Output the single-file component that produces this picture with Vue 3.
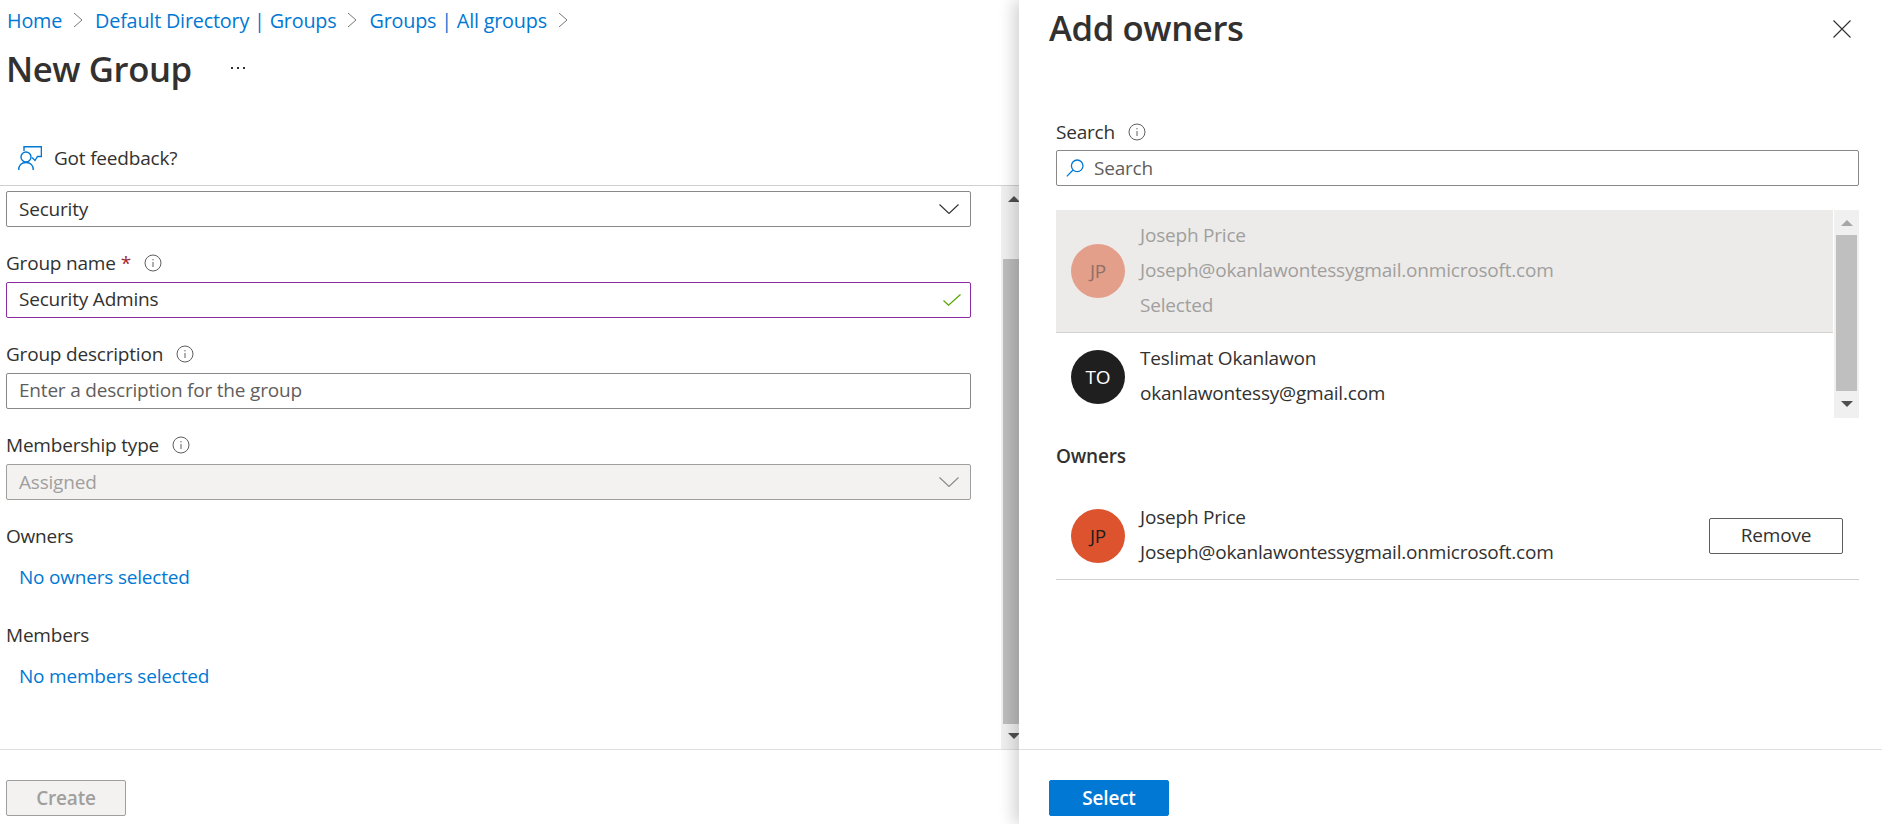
<template>
  <div class="page">
    <!-- Left: New Group form -->
    <section class="group-pane">
      <nav class="crumbs">
        <template v-for="c in crumbs" :key="c">
          <a class="link">{{ c }}</a>
          <svg class="crumb-sep" viewBox="0 0 10 16" width="10" height="16" fill="none">
            <path d="M1 1L9 8L1 15" stroke="#7a7876" stroke-width="1"/>
          </svg>
        </template>
      </nav>
      <div class="title-row">
        <h1 class="page-title">New Group</h1>
        <span class="more">
          <i></i><i></i><i></i>
        </span>
      </div>
      <div class="feedback">
        <svg viewBox="0 0 24 24" width="24" height="24" fill="none" stroke="#0078d4" stroke-width="1.4">
          <path d="M6 5V0.7H23.4V10.5H19.5L17 14.5L14 11.5"/>
          <circle cx="8" cy="11" r="5"/>
          <path d="M0.7 24C0.7 19.5 3.5 16.5 8 16.5C12.5 16.5 15.3 19.5 15.3 24"/>
        </svg>
        <span>Got feedback?</span>
      </div>

      <div class="form-wrap">
        <div class="form">
          <div class="control">
            <span>Security</span>
            <svg class="chev" viewBox="0 0 20 10" width="20" height="10" fill="none">
              <path d="M0.5 0.5L10 9.5L19.5 0.5" stroke="#323130" stroke-width="1.1"/>
            </svg>
          </div>

          <label class="field-label">
            Group name<b class="req">*</b>
            <svg class="info" viewBox="0 0 18 18" width="18" height="18" fill="none">
              <circle cx="9" cy="9" r="8" stroke="#605e5c"/><path d="M9 8V13M9 5V6.4" stroke="#605e5c"/>
            </svg>
          </label>
          <div class="control control--valid">
            <span>Security Admins</span>
            <svg class="chev chev--check" viewBox="0 0 18 12" width="18" height="12" fill="none">
              <path d="M0.5 6.5L5.5 11.2L17.5 0.5" stroke="#57a300" stroke-width="1.2"/>
            </svg>
          </div>

          <label class="field-label">
            Group description
            <svg class="info" viewBox="0 0 18 18" width="18" height="18" fill="none">
              <circle cx="9" cy="9" r="8" stroke="#605e5c"/><path d="M9 8V13M9 5V6.4" stroke="#605e5c"/>
            </svg>
          </label>
          <div class="control control--placeholder">
            <span>Enter a description for the group</span>
          </div>

          <label class="field-label">
            Membership type
            <svg class="info" viewBox="0 0 18 18" width="18" height="18" fill="none">
              <circle cx="9" cy="9" r="8" stroke="#605e5c"/><path d="M9 8V13M9 5V6.4" stroke="#605e5c"/>
            </svg>
          </label>
          <div class="control control--disabled">
            <span>Assigned</span>
            <svg class="chev" viewBox="0 0 20 10" width="20" height="10" fill="none">
              <path d="M0.5 0.5L10 9.5L19.5 0.5" stroke="#8a8886" stroke-width="1.1"/>
            </svg>
          </div>

          <div class="picker-label">Owners</div>
          <a class="link picker-link">No owners selected</a>
          <div class="picker-label picker-label--members">Members</div>
          <a class="link picker-link">No members selected</a>
        </div>

        <div class="form-scroll">
          <span class="tri tri--up"></span>
          <span class="form-thumb"></span>
          <span class="tri tri--down"></span>
        </div>
      </div>

      <div class="group-footer">
        <button class="btn btn--disabled">Create</button>
      </div>
    </section>

    <!-- Right: Add owners blade -->
    <aside class="blade">
      <header class="blade-head">
        <h2 class="blade-title">Add owners</h2>
        <svg class="close" viewBox="0 0 18 18" width="18" height="18" fill="none">
          <path d="M0.5 0.5L17.5 17.5M17.5 0.5L0.5 17.5" stroke="#323130" stroke-width="1.1"/>
        </svg>
      </header>

      <div class="blade-body">
        <label class="search-label">
          Search
          <svg class="info" viewBox="0 0 18 18" width="18" height="18" fill="none">
            <circle cx="9" cy="9" r="8" stroke="#605e5c"/><path d="M9 8V13M9 5V6.4" stroke="#605e5c"/>
          </svg>
        </label>
        <div class="search-box">
          <svg viewBox="0 0 18 18" width="18" height="18" fill="none" stroke="#0078d4" stroke-width="1.3">
            <circle cx="11.2" cy="6.8" r="5.8"/>
            <path d="M7 11L0.8 17.4"/>
          </svg>
          <span>Search</span>
        </div>

        <div class="results">
          <div class="result-list">
            <div
              v-for="p in results"
              :key="p.email"
              :class="['person', 'person--result', { 'person--selected': p.selected }]"
            >
              <span class="avatar" :style="{ background: p.color, color: p.textColor }">{{ p.initials }}</span>
              <div class="person-text">
                <div>{{ p.name }}</div>
                <div>{{ p.email }}</div>
                <div v-if="p.selected">Selected</div>
              </div>
            </div>
          </div>
          <div class="result-scroll">
            <span class="tri tri--up tri--light"></span>
            <span class="result-thumb"></span>
            <span class="tri tri--down"></span>
          </div>
        </div>

        <div class="owners-title">Owners</div>
        <div class="person person--owner">
          <span class="avatar avatar--owner">JP</span>
          <div class="person-text">
            <div>Joseph Price</div>
            <div>Joseph@okanlawontessygmail.onmicrosoft.com</div>
          </div>
          <button class="btn btn--outline">Remove</button>
        </div>
      </div>

      <div class="blade-footer">
        <button class="btn btn--primary">Select</button>
      </div>
    </aside>
  </div>
</template>

<script setup>
const crumbs = ['Home', 'Default Directory | Groups', 'Groups | All groups']

const results = [
  {
    initials: 'JP',
    name: 'Joseph Price',
    email: 'Joseph@okanlawontessygmail.onmicrosoft.com',
    color: '#e49f8a',
    textColor: '#8f7066',
    selected: true,
  },
  {
    initials: 'TO',
    name: 'Teslimat Okanlawon',
    email: 'okanlawontessy@gmail.com',
    color: '#1f1f1f',
    textColor: '#ffffff',
    selected: false,
  },
]
</script>

<style>
html, body {
  margin: 0;
  background: #fff;
}
</style>

<style scoped>
.page {
  display: flex;
  width: 1882px;
  height: 824px;
  overflow: hidden;
  background: #fff;
  color: #323130;
  font-family: "Open Sans", "Noto Sans", sans-serif;
  font-size: 19px;
  letter-spacing: -0.2px;
}

.link {
  color: #0078d4;
  text-decoration: none;
}

/* group pane */
.group-pane {
  width: 1019px;
  flex-shrink: 0;
  display: flex;
  flex-direction: column;
}

.crumbs {
  height: 40px;
  padding-left: 7px;
  display: flex;
  align-items: center;
  font-size: 19.8px;
}

.crumb-sep {
  margin: 0 12px 0 11px;
}

.title-row {
  height: 56px;
  padding: 0 0 4px 6px;
  display: flex;
  align-items: center;
}

.page-title {
  margin: 0;
  font-size: 34.7px;
  font-weight: 600;
  letter-spacing: -0.4px;
}

.more {
  margin-left: 39px;
  display: flex;
  gap: 4px;
}
.more i {
  width: 2px;
  height: 2px;
  background: #323130;
}

.feedback {
  height: 86px;
  box-sizing: border-box;
  padding: 46px 0 0 18px;
  display: flex;
  align-items: flex-start;
  gap: 12px;
  line-height: 24px;
  border-bottom: 1px solid #d2d0ce;
}

.form-wrap {
  flex: 1;
  display: flex;
  min-height: 0;
}

.form {
  flex: 1;
  padding: 5px 30px 0 6px;
}

.control {
  height: 36px;
  box-sizing: border-box;
  border: 1px solid #8a8886;
  border-radius: 2px;
  padding: 0 10px 0 12px;
  display: flex;
  align-items: center;
  justify-content: space-between;
}
.control--valid {
  border-color: #8a2da5;
  padding-bottom: 2px;
}
.control--placeholder {
  color: #605e5c;
  padding-bottom: 2px;
}
.control--disabled {
  background: #f3f2f1;
  border-color: #a19f9d;
  color: #a19f9d;
}

.chev { margin-right: 1px; }
.chev--check { margin-right: -1px; margin-top: 2px; }

.field-label {
  display: flex;
  align-items: center;
  height: 24px;
  margin: 24px 0 7px;
}

.req {
  color: #a4262c;
  font-weight: 400;
  margin-left: 5px;
}

.info {
  margin-left: 13px;
  flex-shrink: 0;
}

.picker-label {
  height: 24px;
  line-height: 24px;
  margin-top: 24px;
}
.picker-label--members { margin-top: 34px; }

.picker-link {
  display: block;
  height: 24px;
  line-height: 24px;
  margin-top: 17px;
  padding-left: 13px;
}

/* scrollbars */
.form-scroll {
  width: 18px;
  flex-shrink: 0;
  background: #f0f0f0;
  display: flex;
  flex-direction: column;
  align-items: center;
  padding-top: 10px;
  box-sizing: border-box;
}
.form-scroll .tri { margin-left: 7px; }

.form-thumb {
  width: 16px;
  height: 465px;
  margin: 57px 0 9px 2px;
  background: #bdbdbd;
}

.tri {
  width: 0;
  height: 0;
  border-left: 6px solid transparent;
  border-right: 6px solid transparent;
}
.tri--up { border-bottom: 6px solid #505050; }
.tri--down { border-top: 6px solid #505050; }
.tri--light { border-bottom-color: #a6a6a6; }

.group-footer {
  height: 75px;
  box-sizing: border-box;
  border-top: 1px solid #e1dfdd;
  padding: 30px 0 0 6px;
}

/* buttons */
.btn {
  height: 36px;
  width: 120px;
  box-sizing: border-box;
  border-radius: 2px;
  font: inherit;
  letter-spacing: inherit;
  padding: 0;
}
.btn--disabled {
  background: #f3f2f1;
  border: 1px solid #a19f9d;
  color: #a19f9d;
  font-weight: 600;
}
.btn--primary {
  background: #0078d4;
  border: 1px solid #0078d4;
  color: #fff;
  font-weight: 600;
}
.btn--outline {
  width: 134px;
  background: #fff;
  border: 1px solid #605e5c;
  color: #323130;
  margin-left: auto;
  margin-right: 16px;
  padding-bottom: 2px;
}

/* blade */
.blade {
  flex: 1;
  min-width: 0;
  display: flex;
  flex-direction: column;
  background: #fff;
  position: relative;
  box-shadow: -6px 0 14px rgba(0, 0, 0, 0.16);
}

.blade-head {
  height: 54px;
  padding: 4px 31px 0 30px;
  box-sizing: border-box;
  display: flex;
  justify-content: space-between;
  align-items: center;
}

.blade-title {
  margin: -4px 0 0;
  font-size: 34.7px;
  font-weight: 600;
  letter-spacing: -0.4px;
}

.blade-body {
  flex: 1;
  padding: 66px 23px 0 37px;
}

.search-label {
  display: flex;
  align-items: center;
  height: 24px;
  margin-bottom: 6px;
}

.search-box {
  height: 36px;
  box-sizing: border-box;
  border: 1px solid #8a8886;
  border-radius: 2px;
  padding-left: 9px;
  display: flex;
  align-items: center;
  gap: 10px;
  color: #605e5c;
}

.results {
  display: flex;
  margin-top: 24px;
  height: 208px;
}

.result-list {
  width: 777px;
  flex-shrink: 0;
}

.person {
  display: flex;
  align-items: center;
  box-sizing: border-box;
  padding-left: 15px;
  border-bottom: 1px solid #d2d0ce;
}

.person--result { border-bottom: none; }

.person--selected {
  height: 123px;
  background: #ecebe9;
  color: #a19f9d;
  border-bottom: 1px solid #d2d0ce;
}

.person--owner { height: 80px; padding-bottom: 8px; margin-top: 32px; }

.avatar {
  width: 54px;
  height: 54px;
  border-radius: 50%;
  flex-shrink: 0;
  display: flex;
  align-items: center;
  justify-content: center;
  margin-right: 15px;
}
.avatar--owner {
  background: #dc532d;
  color: #201f1e;
}

.person-text {
  margin-top: -2px;
}
.person-text > div {
  height: 35px;
  line-height: 35px;
}

.person--result:not(.person--selected) {
  height: 85px;
  padding-top: 2px;
}

.result-scroll {
  width: 25px;
  margin-left: 1px;
  background: #f0f0f0;
  display: flex;
  flex-direction: column;
  align-items: center;
  padding-top: 10px;
  box-sizing: border-box;
}

.result-thumb {
  width: 21px;
  height: 156px;
  margin: 9px 0 10px;
  background: #bfbfbf;
}

.owners-title {
  font-weight: 600;
  margin-top: 26px;
  line-height: 24px;
}

.blade-footer {
  height: 75px;
  box-sizing: border-box;
  border-top: 1px solid #e1dfdd;
  padding: 30px 0 0 30px;
}
</style>
